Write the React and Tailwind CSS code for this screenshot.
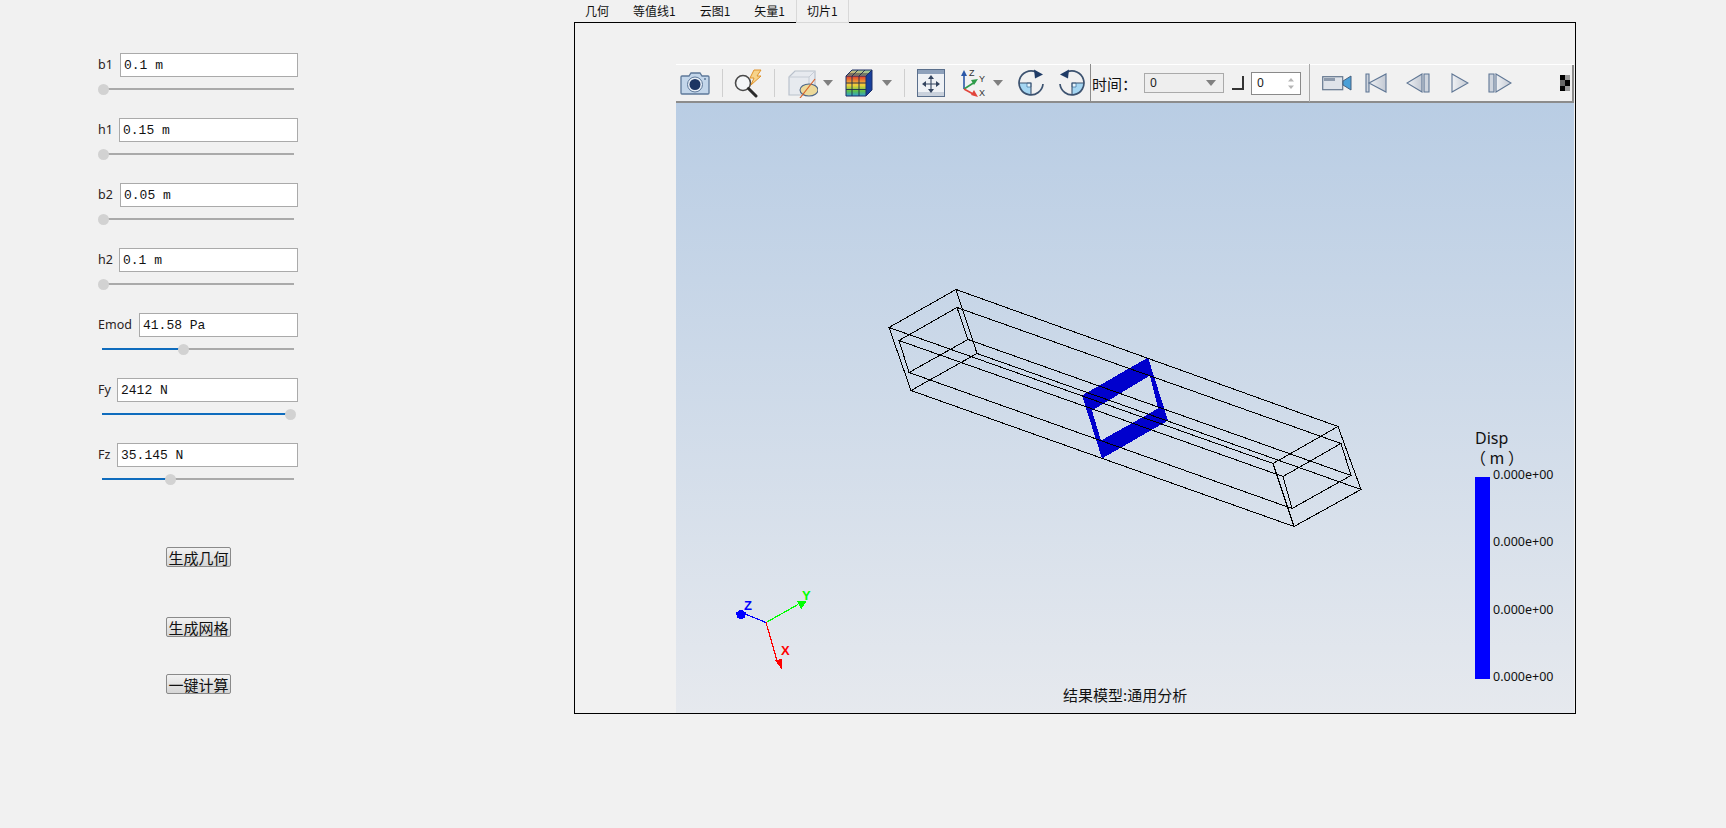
import React from 'react';

const sliders = [
  { label: 'b1', value: '0.1 m', labelW: 'w-[22px]', thumb: 0 },
  { label: 'h1', value: '0.15 m', labelW: 'w-[21px]', thumb: 0 },
  { label: 'b2', value: '0.05 m', labelW: 'w-[22px]', thumb: 0 },
  { label: 'h2', value: '0.1 m', labelW: 'w-[21px]', thumb: 0 },
  { label: 'Emod', value: '41.58 Pa', labelW: 'w-[41px]', thumb: 80 },
  { label: 'Fy', value: '2412 N', labelW: 'w-[19px]', thumb: 187 },
  { label: 'Fz', value: '35.145 N', labelW: 'w-[19px]', thumb: 67 },
];

const tabs = ['几何', '等值线1', '云图1', '矢量1', '切片1'];
const legendValues = ['0.000e+00', '0.000e+00', '0.000e+00', '0.000e+00'];

const SliderRow = ({ label, value, labelW, thumb }) => (
  <div className="h-[65px] w-[200px]">
    <div className="flex items-center">
      <span className={`${labelW} shrink-0 pt-[1px] text-[12.5px] text-[#2a2222] font-['Noto_Sans',sans-serif]`}>{label}</span>
      <div className="h-[24px] flex-1 border border-[#aaa] bg-white pl-[3px] text-[13px] leading-[24px] text-[#111] font-['Liberation_Mono',monospace]">
        {value}
      </div>
    </div>
    <div className="relative mt-[7px] h-[11px] w-[196px]">
      <div className="absolute left-[4px] right-0 top-[4px] h-[2px] bg-[#aaa]"></div>
      <div style={{ width: thumb }} className="absolute left-[4px] top-[4px] h-[2px] bg-[#0f6cbd]"></div>
      <div style={{ left: thumb }} className="absolute top-0 h-[11px] w-[11px] rounded-full bg-[#d2d2d2]"></div>
    </div>
  </div>
);

const ActionButton = ({ children, className }) => (
  <div className={`${className} flex h-[20px] w-[65px] items-center justify-center rounded-[2px] border border-[#8a8a8a] bg-gradient-to-b from-[#f2f2f2] to-[#d6d6d6] text-[15px] leading-none text-[#111] font-['Noto_Sans_CJK_SC',sans-serif]`}>
    {children}
  </div>
);

const Sep = ({ className }) => <div className={`${className} h-[28px] w-px shrink-0 bg-[#cfcfcf]`}></div>;

const Caret = ({ className }) => (
  <svg width="10" height="6" viewBox="0 0 10 6" className={`${className} shrink-0`}>
    <path d="M0 0H10L5 6Z" fill="#808080" />
  </svg>
);

const CameraIcon = ({ className }) => (
  <svg width="30" height="26" viewBox="0 0 30 26" className={`${className} shrink-0`}>
    <path d="M2 6H9L11 3H20L22 6H28Q29 6 29 7V23Q29 24 28 24H2Q1 24 1 23V7Q1 6 2 6Z" fill="#c3d6ea" stroke="#5d7899" strokeWidth="1.3" />
    <circle cx="15" cy="14.5" r="7.5" fill="#e8eff7" stroke="#5d7899" />
    <circle cx="15" cy="14.5" r="5.5" fill="#1c3563" />
    <circle cx="25" cy="9" r="1" fill="#5d7899" />
  </svg>
);

const SearchBoltIcon = ({ className }) => (
  <svg width="30" height="30" viewBox="0 0 30 30" className={`${className} shrink-0`}>
    <circle cx="10" cy="15" r="7.5" fill="#f4f6f8" stroke="#4a4a4a" strokeWidth="1.6" />
    <path d="M15.5 20.5L23 28" stroke="#2b2b2b" strokeWidth="3" strokeLinecap="round" />
    <path d="M21 2H28L24 8H28L18 17L21 10H17Z" fill="#f6d38a" stroke="#e0932a" strokeWidth="1" />
  </svg>
);

const ClipBoxIcon = ({ className }) => (
  <svg width="30" height="30" viewBox="0 0 30 30" className={`${className} shrink-0`}>
    <path d="M1 9L7 3H27V19L22 27H1Z" fill="#e7eaef" stroke="#b9c1cc" strokeWidth="1.2" />
    <path d="M1 9H21V27M21 9L27 3" fill="none" stroke="#c6ccd5" />
    <ellipse cx="21" cy="22" rx="9" ry="6" fill="#ecd99a" stroke="#4d6688" strokeWidth="1.1" />
    <path d="M12 30L27 11" stroke="#d8622a" strokeWidth="1.2" />
  </svg>
);

const ColorCubeIcon = ({ className }) => (
  <svg width="28" height="28" viewBox="0 0 28 28" className={`${className} shrink-0`}>
    <defs>
      <linearGradient id="cubeFront" x1="0" y1="0" x2="0" y2="1">
        <stop offset="0" stopColor="#e2392c" />
        <stop offset="0.45" stopColor="#f6d23a" />
        <stop offset="0.75" stopColor="#5cc04a" />
        <stop offset="1" stopColor="#2f9fd8" />
      </linearGradient>
      <linearGradient id="cubeTop" x1="0" y1="1" x2="1" y2="0">
        <stop offset="0" stopColor="#e8a25c" />
        <stop offset="1" stopColor="#8fd0a0" />
      </linearGradient>
    </defs>
    <path d="M1 7H21V27H1Z" fill="url(#cubeFront)" />
    <path d="M1 7L7 1H27L21 7Z" fill="url(#cubeTop)" />
    <path d="M21 7L27 1V21L21 27Z" fill="#173f9c" />
    <path d="M7 7V27M14 7V27M1 14H21M1 20.5H21M3 5H23M7 7L13 1M14 7L20 1" stroke="#1d2b4d" strokeWidth="0.9" fill="none" />
    <path d="M1 7H21V27H1ZM21 7L27 1V21L21 27M1 7L7 1H27" fill="none" stroke="#1c2f66" />
  </svg>
);

const FitIcon = ({ className }) => (
  <svg width="28" height="28" viewBox="0 0 28 28" className={`${className} shrink-0`}>
    <rect x="0.5" y="0.5" width="27" height="27" fill="#eef1f5" stroke="#5a6f8c" />
    <rect x="1" y="1" width="26" height="4" fill="#8ea1bb" />
    <rect x="1" y="23" width="26" height="4" fill="#c9d1dc" />
    <path d="M14 8V22M7 15H21" stroke="#33445f" strokeWidth="1.1" />
    <path d="M14 6L17 10H11ZM14 24L11 20H17ZM5 15L9 12V18ZM23 15L19 18V12Z" fill="#33445f" />
  </svg>
);

const AxesIcon = ({ className }) => (
  <svg width="30" height="30" viewBox="0 0 30 30" className={`${className} shrink-0`}>
    <path d="M6 21V6" stroke="#2a57a8" strokeWidth="1.6" />
    <path d="M6 2L3 8H9Z" fill="#2a57a8" />
    <path d="M6 21L17 14" stroke="#2f9c4a" strokeWidth="1.6" />
    <path d="M20 11L13 12L16 17Z" fill="#2f9c4a" />
    <path d="M6 21L17 27" stroke="#e2443a" strokeWidth="1.6" />
    <path d="M20 29L13 27L16 22Z" fill="#e2443a" />
    <text x="11" y="8" fontSize="9" fill="#333" fontFamily="Liberation Sans">Z</text>
    <text x="21" y="14" fontSize="9" fill="#333" fontFamily="Liberation Sans">Y</text>
    <text x="21" y="28" fontSize="9" fill="#333" fontFamily="Liberation Sans">X</text>
  </svg>
);

// ring with a shaded lower-left quadrant, arrow head at the top right
const RotateIcon = ({ className }) => (
  <svg width="28" height="28" viewBox="0 0 28 28" className={`${className} shrink-0`}>
    <path d="M14 14H2A12 12 0 0 0 14 26Z" fill="#a5d6f2" />
    <path d="M14 14H10V18H14Z" fill="#e6f4fc" stroke="#3b6d9b" strokeWidth="0.7" />
    <path d="M2 14H14V26" fill="none" stroke="#3c526f" strokeWidth="1.1" />
    <path d="M19 3A12 12 0 1 0 26 15" fill="none" stroke="#3c526f" strokeWidth="1.7" />
    <path d="M17 0.5L26 5.5L18 9.5Z" fill="#1f3b66" />
  </svg>
);

const VideoIcon = ({ className }) => (
  <svg width="30" height="16" viewBox="0 0 30 16" className={`${className} shrink-0`}>
    <rect x="0.7" y="1.7" width="20" height="13" fill="#dfe3e9" stroke="#66788f" strokeWidth="1.2" />
    <rect x="2" y="3" width="11" height="3" fill="#8d9aac" />
    <path d="M21 6L29 1V15L21 10Z" fill="#4aa0d8" stroke="#47617f" strokeWidth="1" />
  </svg>
);

const PlayIcon = ({ d, bar, className, width = 22 }) => (
  <svg width={width} height="20" viewBox={`0 0 ${width} 20`} className={`${className} shrink-0`}>
    <defs>
      <linearGradient id="playFill" x1="0" y1="0" x2="1" y2="0">
        <stop offset="0" stopColor="#f0f2f5" />
        <stop offset="1" stopColor="#c3c9d3" />
      </linearGradient>
    </defs>
    {bar && <path d={bar} fill="#cfd5de" stroke="#5f7694" strokeWidth="1.1" />}
    <path d={d} fill="url(#playFill)" stroke="#5f7694" strokeWidth="1.1" />
  </svg>
);

const Toolbar = () => (
  <div className="flex h-[39px] shrink-0 items-center border-t border-b-2 border-t-white border-b-[#8c8c8c] bg-[#f1f1f1]">
    <CameraIcon className="ml-[4px]" />
    <Sep className="ml-[12px]" />
    <SearchBoltIcon className="ml-[10px]" />
    <Sep className="ml-[11px]" />
    <ClipBoxIcon className="ml-[13px]" />
    <Caret className="ml-[5px]" />
    <ColorCubeIcon className="ml-[12px]" />
    <Caret className="ml-[9px]" />
    <Sep className="ml-[12px]" />
    <FitIcon className="ml-[12px]" />
    <AxesIcon className="ml-[13px]" />
    <Caret className="ml-[5px]" />
    <RotateIcon className="ml-[14px]" />
    <RotateIcon className="ml-[13px] -scale-x-100" />
    <div className="ml-[4px] h-[38px] w-px shrink-0 bg-[#8c8c8c]"></div>
    <span className="ml-[1px] w-[52px] shrink-0 text-[15px] leading-none text-[#111] font-['Noto_Sans_CJK_SC',sans-serif]">时间：</span>
    <div className="flex h-[20px] w-[80px] shrink-0 items-center justify-between border border-[#aaa] bg-[#eee] pl-[5px] pr-[7px] text-[12px] text-[#222] font-['Noto_Sans',sans-serif]">
      0
      <Caret />
    </div>
    <div className="ml-[8px] h-[14px] w-[12px] shrink-0 border-r-2 border-b-2 border-r-[#333] border-b-[#333]"></div>
    <div className="ml-[7px] flex h-[23px] w-[50px] shrink-0 items-center justify-between border border-[#8a8a8a] bg-white pl-[5px] pr-[5px] text-[12px] text-[#222] font-['Noto_Sans',sans-serif]">
      0
      <svg width="8" height="13" viewBox="0 0 8 13">
        <path d="M4 1L7 4.5H1ZM4 12L1 8.5H7Z" fill="#b5b5b5" />
      </svg>
    </div>
    <div className="ml-[8px] h-[38px] w-px shrink-0 bg-[#a8a8a8]"></div>
    <div className="ml-[8px] flex h-[37px] flex-1 items-center border-r-2 border-r-[#8c8c8c]">
      <VideoIcon className="ml-[4px]" />
      <PlayIcon width={22} className="ml-[13px]" bar="M1 1H4V19H1Z" d="M21 1V19L4 10Z" />
      <PlayIcon width={24} className="ml-[19px]" bar="M18 1H23V19H18Z" d="M16 1V19L1 10Z" />
      <PlayIcon width={18} className="ml-[21px]" d="M1 1V19L17 10Z" />
      <PlayIcon width={24} className="ml-[19px]" bar="M1 1H6V19H1Z" d="M8 1V19L23 10Z" />
      <div className="ml-auto mr-[2px] grid h-[16px] w-[10px] shrink-0 grid-cols-2">
        <div className="bg-black"></div>
        <div className="bg-[#999]"></div>
        <div className="bg-[#666]"></div>
        <div className="bg-black"></div>
        <div className="bg-black"></div>
        <div className="bg-[#999]"></div>
      </div>
    </div>
  </div>
);

// outer and inner box corners, near end then far end
const outerNear = [[889, 327], [956, 289], [977, 353], [911, 390]];
const outerFar = [[1273, 463], [1338, 426], [1361, 489], [1294, 526]];
const innerNear = [[899, 340], [957, 307], [968, 339], [909, 372]];
const innerFar = [[1283, 476], [1341, 443], [1351, 475], [1292, 508]];

const ring = pts => pts.map(p => p.join(',')).join(' ');

const Scene = () => (
  <svg viewBox="676 103 898 609" shapeRendering="crispEdges" className="absolute inset-0 h-full w-full">
    <path
      fillRule="evenodd"
      fill="#0000cd"
      d="M1082 395L1148 357L1168 420L1102 458ZM1092 410L1101 440L1158 408L1150 375Z"
    />
    <g fill="none" stroke="#000" strokeWidth="1">
      {[outerNear, outerFar, innerNear, innerFar].map((pts, i) => (
        <polygon key={i} points={ring(pts)} />
      ))}
      {outerNear.map((p, i) => (
        <line key={i} x1={p[0]} y1={p[1]} x2={outerFar[i][0]} y2={outerFar[i][1]} />
      ))}
      {innerNear.map((p, i) => (
        <line key={i} x1={p[0]} y1={p[1]} x2={innerFar[i][0]} y2={innerFar[i][1]} />
      ))}
    </g>
    <line x1="766" y1="622" x2="744" y2="613" stroke="#0000ff" strokeWidth="1.2" />
    <line x1="766" y1="622" x2="798" y2="604" stroke="#00ff00" strokeWidth="1.2" />
    <line x1="766" y1="622" x2="777" y2="660" stroke="#ff0000" strokeWidth="1.2" />
    <path d="M736 612L741 609L746 612L745 617L741 619L737 617Z" fill="#0000ff" />
    <path d="M797 601L807 600L801 609Z" fill="#00ff00" />
    <path d="M775 660L782 658L782 669Z" fill="#ff0000" />
    <g fontFamily="Liberation Sans" fontSize="13" fontWeight="700">
      <text x="744" y="609" fill="#0000ff">Z</text>
      <text x="802" y="599" fill="#00ff00">Y</text>
      <text x="781" y="654" fill="#ff0000">X</text>
    </g>
  </svg>
);

const Legend = () => (
  <div className="absolute left-[799px] top-[326px] font-['Noto_Sans',sans-serif] text-[#111]">
    <div className="text-[16px] leading-[19px]">Disp</div>
    <div className="-ml-[5px] h-[19px] text-[16px] leading-[19px] font-['Noto_Sans_CJK_SC',sans-serif]">（ m ）</div>
    <div className="flex">
      <div className="mt-[10px] h-[202px] w-[15px] bg-[#0000ff]"></div>
      <div className="ml-[3px] flex h-[218px] flex-col justify-between text-[12.5px] leading-[16px]">
        {legendValues.map((v, i) => <span key={i}>{v}</span>)}
      </div>
    </div>
  </div>
);

const App = () => {
  return (
    <div className="flex h-screen w-full overflow-hidden bg-[#f1f1f1]">
      <div className="w-[574px] shrink-0 pl-[98px] pt-[53px]">
        {sliders.map(s => <SliderRow key={s.label} {...s} />)}
        <ActionButton className="ml-[68px] mt-[39px]">生成几何</ActionButton>
        <ActionButton className="ml-[68px] mt-[50px]">生成网格</ActionButton>
        <ActionButton className="ml-[68px] mt-[37px]">一键计算</ActionButton>
      </div>
      <div className="w-[1002px] shrink-0">
        <div className="relative z-10 flex h-[22px] text-[12px] text-[#111] font-['Noto_Sans_CJK_SC',sans-serif]">
          {tabs.map((t, i) => (
            <div
              key={t}
              className={i === 4
                ? 'h-[23px] border-x border-b border-[#d8d8d8] bg-[#f1f1f1] px-[10px] leading-[22px]'
                : i === 3
                  ? 'h-[22px] px-[11px] leading-[22px]'
                  : 'h-[22px] px-[11px] mr-[2px] leading-[22px]'}
            >
              {t}
            </div>
          ))}
        </div>
        <div className="flex h-[692px] flex-col border border-black pl-[101px] pr-[1px] pt-[41px]">
          <Toolbar />
          <div className="relative flex-1 bg-gradient-to-b from-[#b9cde4] to-[#e6e9ee]">
            <Scene />
            <Legend />
            <div className="absolute bottom-[8px] left-[387px] text-[15px] leading-[20px] text-[#111] font-['Noto_Sans_CJK_SC',sans-serif]">
              结果模型:通用分析
            </div>
          </div>
        </div>
      </div>
    </div>
  );
};

export default App;
